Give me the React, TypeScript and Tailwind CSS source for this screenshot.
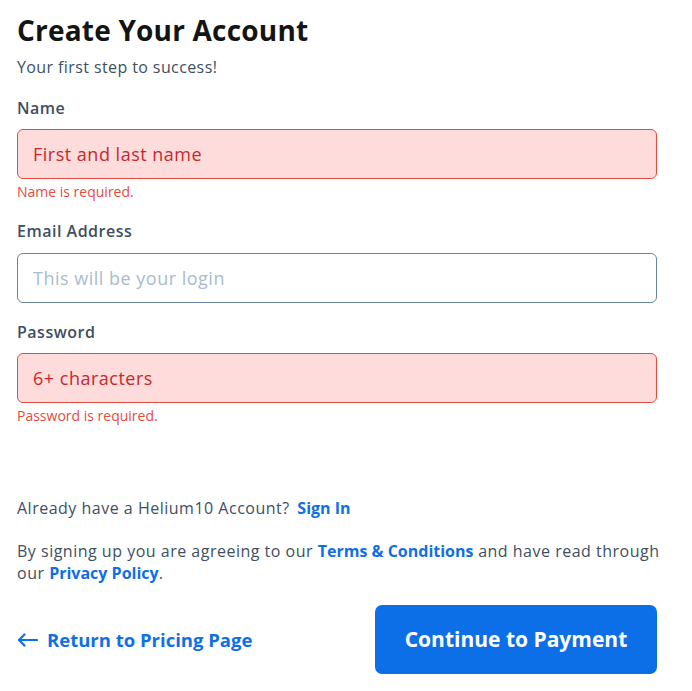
export default function App() {
  const fieldBase =
    "w-full h-[50px] rounded-[6px] border px-[15px] text-[18px] tracking-[0.5px] outline-none";
  const link = "font-bold tracking-normal text-[#0f6fe6]";

  return (
    <div
      className="min-h-screen bg-white px-[17px] pt-[12px] text-[#3e4f5f]"
      style={{ fontFamily: "'Open Sans', 'Noto Sans', sans-serif" }}
    >
      <div className="w-[640px]">
        <h1 className="text-[28px] font-bold leading-[36px] tracking-[0.2px] text-[#141414]">
          Create Your Account
        </h1>
        <p className="mt-[9px] text-[16px] leading-[20px] tracking-[0.4px] text-[#3e4f5f]">
          Your first step to success!
        </p>

        {/* Name */}
        <label className="mt-[21px] block text-[16px] font-semibold leading-[20px] tracking-[0.5px] text-[#3e4f5f]">
          Name
        </label>
        <input
          className={`${fieldBase} mt-[11px] border-[#e84a3f] bg-[#fddcdb] placeholder:text-[#c8272b]`}
          placeholder="First and last name"
        />
        <p className="mt-[4px] text-[14px] leading-[18px] text-[#e84a3f]">
          Name is required.
        </p>

        {/* Email */}
        <label className="mt-[20px] block text-[16px] font-semibold leading-[20px] tracking-[0.5px] text-[#3e4f5f]">
          Email Address
        </label>
        <input
          className={`${fieldBase} mt-[12px] border-[#6783a0] bg-white placeholder:text-[#a8bccf]`}
          placeholder="This will be your login"
        />

        {/* Password */}
        <label className="mt-[19px] block text-[16px] font-semibold leading-[20px] tracking-[0.5px] text-[#3e4f5f]">
          Password
        </label>
        <input
          className={`${fieldBase} mt-[11px] border-[#e84a3f] bg-[#fddcdb] placeholder:text-[#c8272b]`}
          placeholder="6+ characters"
        />
        <p className="mt-[4px] text-[14px] leading-[18px] text-[#e84a3f]">
          Password is required.
        </p>

        <p className="mt-[72px] text-[16px] leading-[22px] tracking-[0.5px] text-[#3e4f5f]">
          Already have a Helium10 Account?{" "}
          <a href="#" className={`ml-[3px] ${link}`}>
            Sign In
          </a>
        </p>

        <p className="mt-[21px] w-[660px] text-[16px] leading-[22px] tracking-[0.5px] text-[#3e4f5f]">
          By signing up you are agreeing to our{" "}
          <a href="#" className={link}>
            Terms &amp; Conditions
          </a>{" "}
          and have read through
          <br />
          our{" "}
          <a href="#" className={link}>
            Privacy Policy
          </a>
          .
        </p>

        <div className="mt-[21px] flex items-center justify-between">
          <a
            href="#"
            className="flex items-center gap-[9px] text-[18.5px] font-bold text-[#0f6fe6]"
          >
            <svg
              width="21"
              height="14"
              viewBox="0 0 21 14"
              fill="none"
              stroke="currentColor"
              strokeWidth="2.2"
              strokeLinecap="round"
              strokeLinejoin="round"
            >
              <path d="M20 7H2" />
              <path d="M7.5 1.5L2 7l5.5 5.5" />
            </svg>
            Return to Pricing Page
          </a>
          <button className="h-[69px] w-[282px] rounded-[7px] bg-[#0d6fe8] text-[21px] font-bold text-white">
            Continue to Payment
          </button>
        </div>
      </div>
    </div>
  );
}
